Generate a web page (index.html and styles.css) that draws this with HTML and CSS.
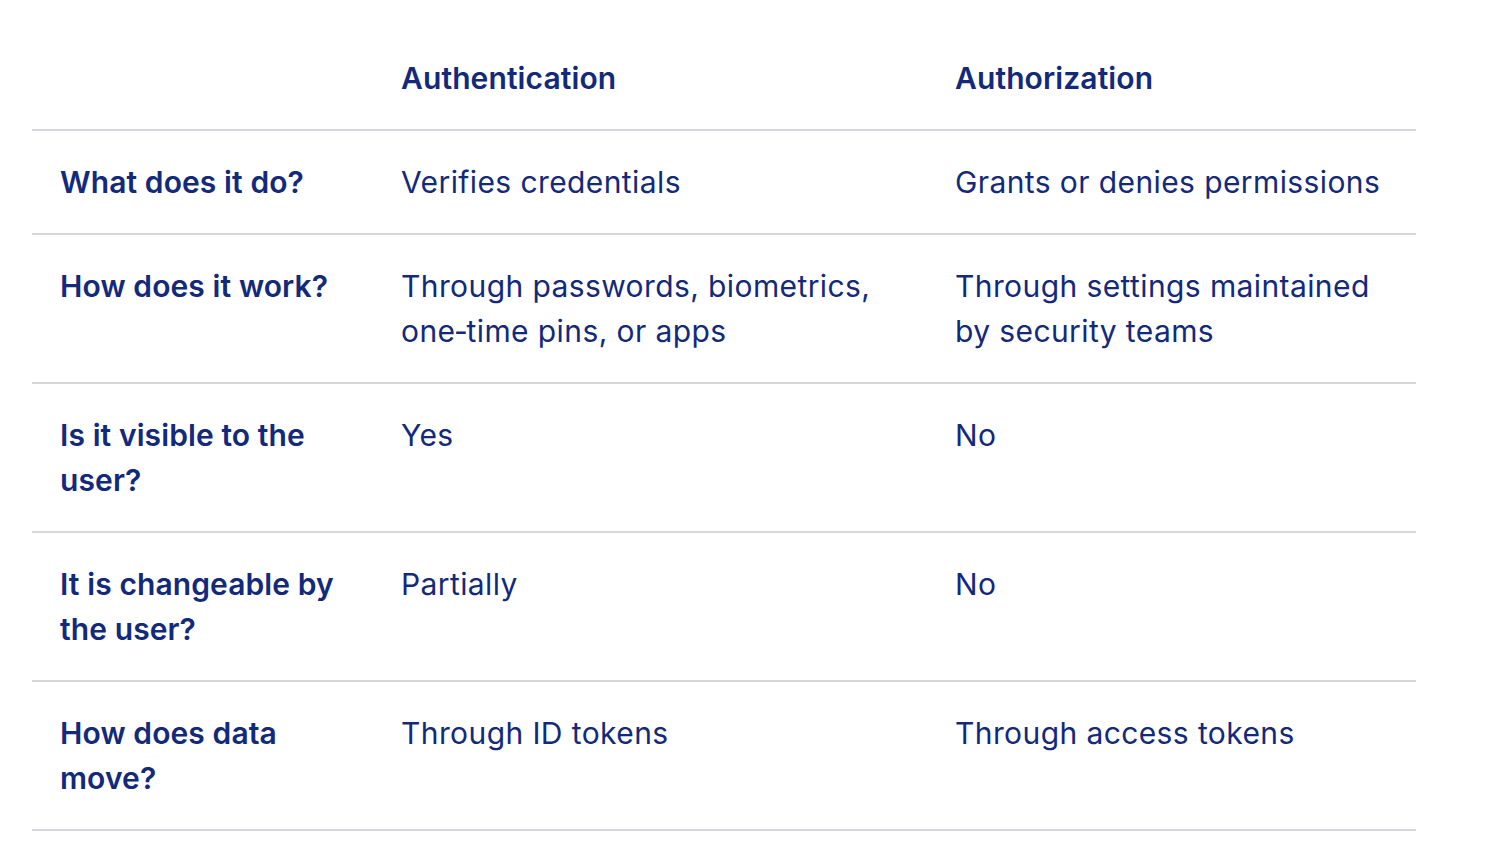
FILE: index.html
```html
<!DOCTYPE html>
<html lang="en">
<head>
<meta charset="utf-8">
<link rel="stylesheet" href="styles.css">
<title>Authentication vs Authorization</title>
</head>
<body>
<div class="wrap">
  <div class="table">
    <div class="row head">
      <div class="cell"></div>
      <div class="cell">Authentication</div>
      <div class="cell">Authorization</div>
    </div>
    <div class="row">
      <div class="cell q">What does it do?</div>
      <div class="cell">Verifies credentials</div>
      <div class="cell">Grants or denies permissions</div>
    </div>
    <div class="row">
      <div class="cell q">How does it work?</div>
      <div class="cell">Through passwords, biometrics, one&#8209;time pins, or apps</div>
      <div class="cell">Through settings maintained by security teams</div>
    </div>
    <div class="row">
      <div class="cell q">Is it visible to the user?</div>
      <div class="cell">Yes</div>
      <div class="cell">No</div>
    </div>
    <div class="row">
      <div class="cell q">It is changeable by the user?</div>
      <div class="cell">Partially</div>
      <div class="cell">No</div>
    </div>
    <div class="row">
      <div class="cell q">How does data move?</div>
      <div class="cell">Through ID tokens</div>
      <div class="cell">Through access tokens</div>
    </div>
  </div>
</div>
</body>
</html>
```
FILE: styles.css
```css
html, body {
  margin: 0;
  padding: 0;
  background: #ffffff;
}
.wrap {
  padding: 27px 0 0 32px;
}
.table {
  width: 1384px;
  font-family: "Inter", "Liberation Sans", sans-serif;
  font-size: 30px;
  line-height: 45px;
  letter-spacing: 0.4px;
  color: #13297a;
}
.row {
  display: grid;
  grid-template-columns: 341px 554px 489px;
  border-bottom: 2px solid #d6d6db;
}
.cell {
  padding: 28.5px 28px 28.5px 28px;
}
.head .cell,
.q {
  font-weight: 600;
  letter-spacing: 0.1px;
}
```
